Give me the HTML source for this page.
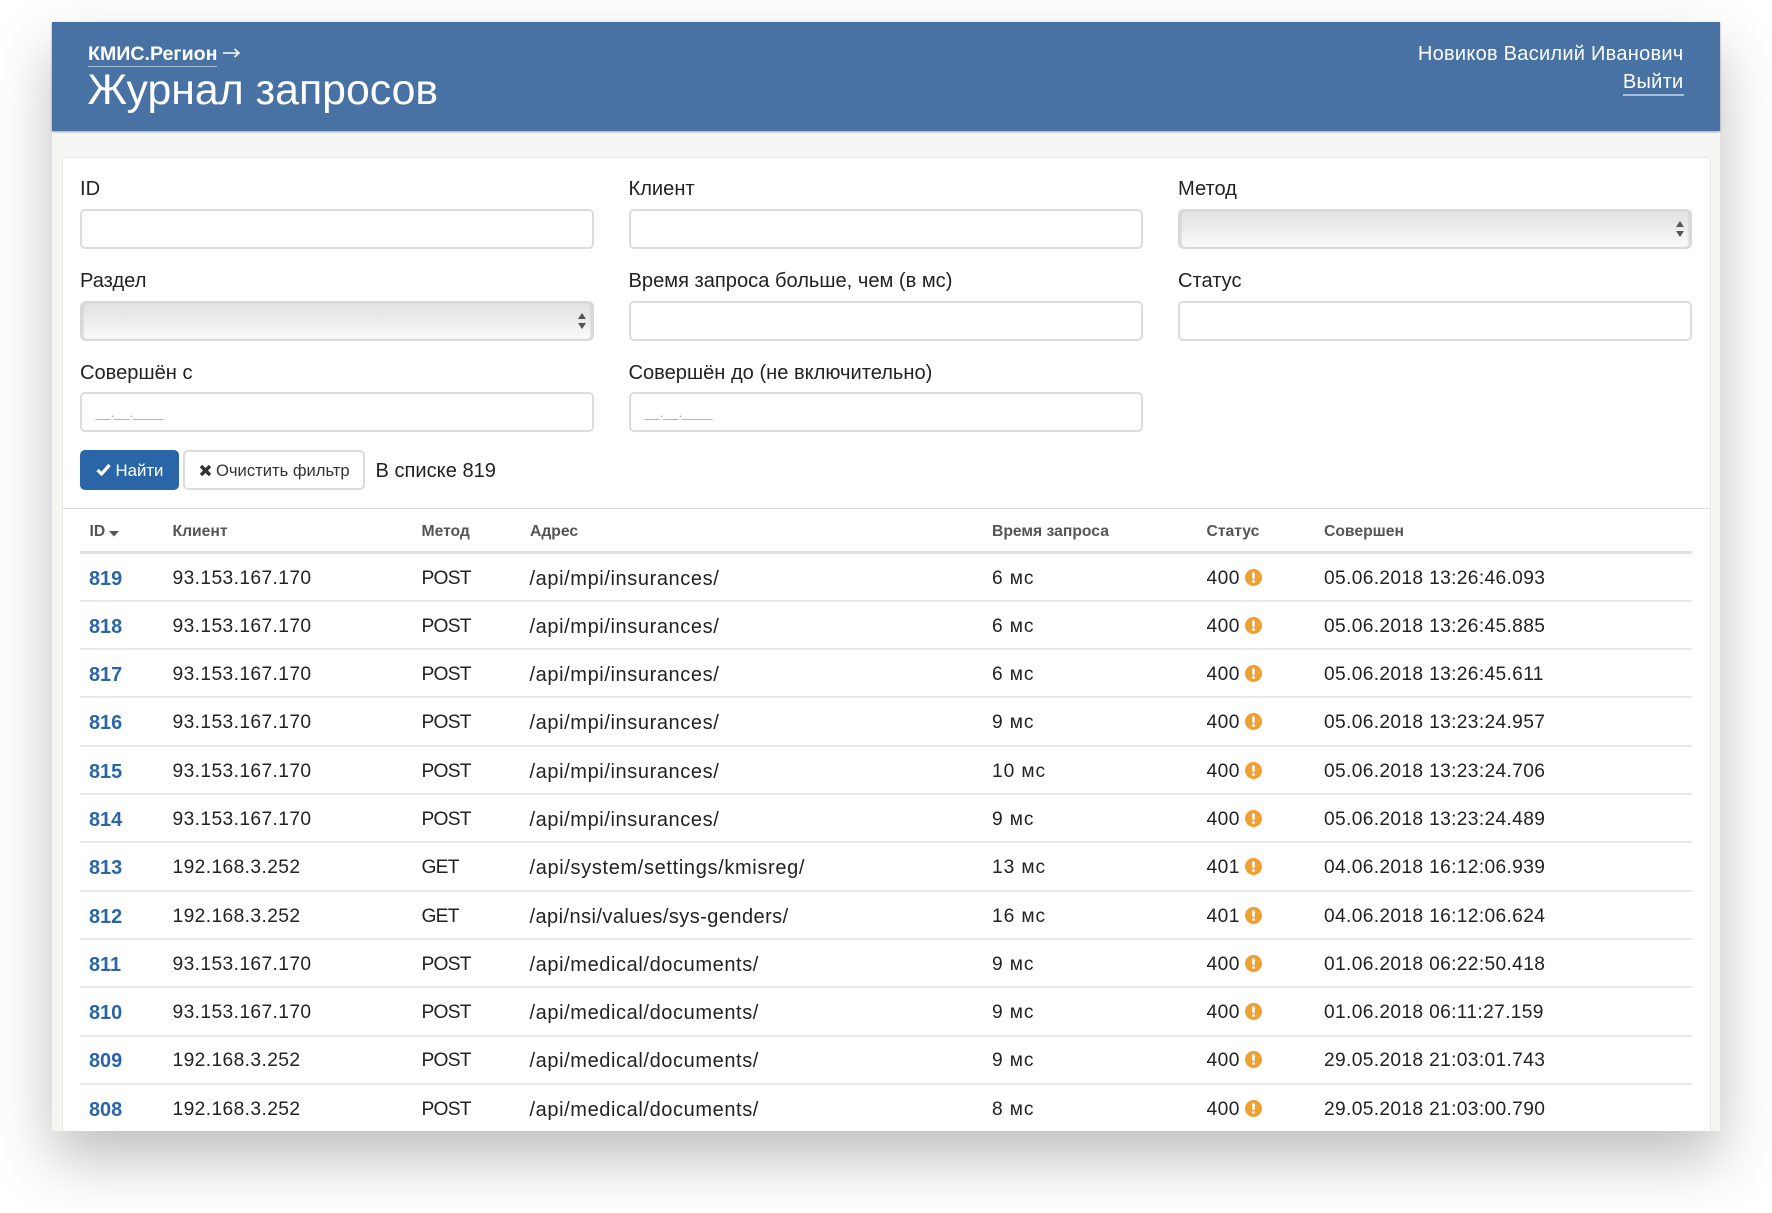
<!DOCTYPE html>
<html lang="ru"><head><meta charset="utf-8"><title>Журнал запросов</title>
<style>
html,body{margin:0;padding:0;background:#fff}
body{width:1772px;height:1213px;position:relative;overflow:hidden;font-family:"Liberation Sans","DejaVu Sans",sans-serif;color:#222}
#w{position:absolute;left:52px;top:22px;width:1668px;height:1109px;background:#f5f6f1;box-shadow:0 28px 55px rgba(0,0,0,.25)}
#page{position:absolute;left:0;top:0;width:1772px;height:1131px;overflow:hidden}
#h{position:absolute;left:52px;top:22px;width:1668px;height:109px;background:#4872a4;box-shadow:0 1px 2px rgba(0,0,0,.35)}
#c{position:absolute;left:62px;top:157px;width:1647px;height:980px;background:#fff;border:1px solid #e8e8e4;border-radius:3px}
.t{position:absolute;white-space:nowrap;line-height:24px}
.w{color:#fff}
.l{font-size:20.1px;color:#222}
.i{position:absolute;box-sizing:border-box;height:40px;width:514px;background:#fff;border:2px solid #dcdcdc;border-radius:5px}
.s{position:absolute;box-sizing:border-box;height:40px;width:514px;border:2px solid #d8d8d8;border-radius:6px;background:linear-gradient(#e2e2e2,#ebebeb 45%,#fbfbfb);box-shadow:inset 2px 0 2px -1px #ccc,inset -2px 0 2px -1px #ccc}
.s svg{position:absolute;right:5px;top:10px}
.p{position:absolute;left:13.5px;top:9px;font-size:13.6px;color:#aaa;line-height:20px}
.b{position:absolute;box-sizing:border-box;top:450px;height:40px;border-radius:5px;font-size:16.8px;line-height:40px}
.ln{position:absolute;left:80px;width:1612px;height:2px;background:#e8e8e8}
.th{position:absolute;top:520px;font-size:15.7px;font-weight:bold;color:#555;line-height:24px;white-space:nowrap}
.r{position:absolute;left:0;width:1772px;height:48px;line-height:48px;font-size:19.2px;color:#222}
.r span{position:absolute;top:2px;white-space:nowrap}
.a{left:89px;color:#2a65a8;font-weight:bold;font-size:19.9px}
.c{left:172.5px;letter-spacing:.4px}
.r .m{left:421.5px;top:1.5px;letter-spacing:-.75px}
.u{left:529.5px;font-size:20px;letter-spacing:.6px}
.d{left:992px;letter-spacing:.9px}
.st{left:1206.5px;letter-spacing:.45px}
.dt{left:1324px;letter-spacing:.34px}
.r svg{position:absolute;left:1245px;top:16px}
</style></head><body>
<div id="w"></div>
<div id="page">
<div id="h"></div>
<div id="c"></div>
<div class="t w" style="left:88px;top:42px;font-size:19.6px;font-weight:bold"><span style="border-bottom:1.5px solid #a9bfd8;padding-bottom:0;display:inline-block;line-height:23px">КМИС.Регион</span></div>
<svg style="position:absolute;left:223px;top:47px" width="18" height="12" viewBox="0 0 18 12"><path d="M0 6H16M11.5 2L16 6L11.5 10" fill="none" stroke="#fff" stroke-width="1.6"/></svg>
<div class="t w" style="left:87.5px;top:65px;font-size:42.8px;line-height:50px">Журнал запросов</div>
<div class="t w" style="right:88.5px;top:42px;font-size:20px;letter-spacing:.27px">Новиков Василий Иванович</div>
<div class="t w" style="right:88.5px;top:71px;font-size:20px;letter-spacing:.27px;line-height:23px;border-bottom:2px solid #a9bfd8">Выйти</div>

<div class="t l" style="left:80px;top:177px">ID</div>
<div class="t l" style="left:628.5px;top:177px">Клиент</div>
<div class="t l" style="left:1178px;top:177px">Метод</div>
<div class="i" style="left:80px;top:209px"></div>
<div class="i" style="left:629px;top:209px"></div>
<div class="s" style="left:1178px;top:209px"><svg width="10" height="16" viewBox="0 0 10 16"><path d="M5 0L9 6H1ZM5 16L1 10H9Z" fill="#555"/></svg></div>

<div class="t l" style="left:80px;top:269px">Раздел</div>
<div class="t l" style="left:628.5px;top:269px">Время запроса больше, чем (в мс)</div>
<div class="t l" style="left:1178px;top:269px">Статус</div>
<div class="s" style="left:80px;top:301px"><svg width="10" height="16" viewBox="0 0 10 16"><path d="M5 0L9 6H1ZM5 16L1 10H9Z" fill="#555"/></svg></div>
<div class="i" style="left:629px;top:301px"></div>
<div class="i" style="left:1178px;top:301px"></div>

<div class="t l" style="left:80px;top:361px">Совершён с</div>
<div class="t l" style="left:628.5px;top:361px">Совершён до (не включительно)</div>
<div class="i" style="left:80px;top:392px"><span class="p">__.__.____</span></div>
<div class="i" style="left:629px;top:392px"><span class="p">__.__.____</span></div>

<div class="b" style="left:80px;width:99px;background:#2a65a8;color:#fff;border:1px solid #2a65a8">
<svg style="position:absolute;left:15px;top:12px" width="15" height="13" viewBox="0 0 15 13"><path d="M1.5 7L5.5 11L13.5 2" fill="none" stroke="#fff" stroke-width="3.2"/></svg>
<span style="position:absolute;left:34.5px;top:0">Найти</span></div>
<div class="b" style="left:183px;width:182px;background:#fff;border:2px solid #dcdcdc;color:#333">
<svg style="position:absolute;left:14px;top:12px" width="13" height="13" viewBox="0 0 13 13"><path d="M2 2L11 11M11 2L2 11" fill="none" stroke="#333" stroke-width="3.4"/></svg>
<span style="position:absolute;left:31px;top:-1px;font-size:16.6px">Очистить фильтр</span></div>
<div class="t" style="left:375.5px;top:459px;font-size:20.1px">В списке 819</div>

<div style="position:absolute;left:62px;width:1648px;top:507.5px;height:1.5px;background:#dedede"></div>
<div class="th" style="left:89.5px">ID</div>
<svg style="position:absolute;left:109px;top:531px" width="10" height="6" viewBox="0 0 10 6"><path d="M0 0H10L5 5.5Z" fill="#555"/></svg>
<div class="th" style="left:172.5px">Клиент</div>
<div class="th" style="left:421.5px">Метод</div>
<div class="th" style="left:530px">Адрес</div>
<div class="th" style="left:992px">Время запроса</div>
<div class="th" style="left:1206.5px">Статус</div>
<div class="th" style="left:1324px">Совершен</div>
<div class="ln" style="top:551px;height:3px;background:#e2e2e2"></div>

<div class="ln" style="top:600px"></div><div class="ln" style="top:648px"></div><div class="ln" style="top:696px"></div><div class="ln" style="top:745px"></div><div class="ln" style="top:793px"></div><div class="ln" style="top:841px"></div><div class="ln" style="top:890px"></div><div class="ln" style="top:938px"></div><div class="ln" style="top:986px"></div><div class="ln" style="top:1035px"></div><div class="ln" style="top:1083px"></div>

<div class="r" style="top:553px"><span class="a">819</span><span class="c">93.153.167.170</span><span class="m">POST</span><span class="u">/api/mpi/insurances/</span><span class="d">6 мс</span><span class="st">400</span><svg width="17" height="17" viewBox="0 0 17 17"><circle cx="8.5" cy="8.5" r="8.5" fill="#f0a030"/><path d="M7 3.5H10L9.6 10H7.4ZM7.2 11.2H9.8V13.6H7.2Z" fill="#fff"/></svg><span class="dt">05.06.2018 13:26:46.093</span></div>
<div class="r" style="top:601px"><span class="a">818</span><span class="c">93.153.167.170</span><span class="m">POST</span><span class="u">/api/mpi/insurances/</span><span class="d">6 мс</span><span class="st">400</span><svg width="17" height="17" viewBox="0 0 17 17"><circle cx="8.5" cy="8.5" r="8.5" fill="#f0a030"/><path d="M7 3.5H10L9.6 10H7.4ZM7.2 11.2H9.8V13.6H7.2Z" fill="#fff"/></svg><span class="dt">05.06.2018 13:26:45.885</span></div>
<div class="r" style="top:649px"><span class="a">817</span><span class="c">93.153.167.170</span><span class="m">POST</span><span class="u">/api/mpi/insurances/</span><span class="d">6 мс</span><span class="st">400</span><svg width="17" height="17" viewBox="0 0 17 17"><circle cx="8.5" cy="8.5" r="8.5" fill="#f0a030"/><path d="M7 3.5H10L9.6 10H7.4ZM7.2 11.2H9.8V13.6H7.2Z" fill="#fff"/></svg><span class="dt">05.06.2018 13:26:45.611</span></div>
<div class="r" style="top:697px"><span class="a">816</span><span class="c">93.153.167.170</span><span class="m">POST</span><span class="u">/api/mpi/insurances/</span><span class="d">9 мс</span><span class="st">400</span><svg width="17" height="17" viewBox="0 0 17 17"><circle cx="8.5" cy="8.5" r="8.5" fill="#f0a030"/><path d="M7 3.5H10L9.6 10H7.4ZM7.2 11.2H9.8V13.6H7.2Z" fill="#fff"/></svg><span class="dt">05.06.2018 13:23:24.957</span></div>
<div class="r" style="top:746px"><span class="a">815</span><span class="c">93.153.167.170</span><span class="m">POST</span><span class="u">/api/mpi/insurances/</span><span class="d">10 мс</span><span class="st">400</span><svg width="17" height="17" viewBox="0 0 17 17"><circle cx="8.5" cy="8.5" r="8.5" fill="#f0a030"/><path d="M7 3.5H10L9.6 10H7.4ZM7.2 11.2H9.8V13.6H7.2Z" fill="#fff"/></svg><span class="dt">05.06.2018 13:23:24.706</span></div>
<div class="r" style="top:794px"><span class="a">814</span><span class="c">93.153.167.170</span><span class="m">POST</span><span class="u">/api/mpi/insurances/</span><span class="d">9 мс</span><span class="st">400</span><svg width="17" height="17" viewBox="0 0 17 17"><circle cx="8.5" cy="8.5" r="8.5" fill="#f0a030"/><path d="M7 3.5H10L9.6 10H7.4ZM7.2 11.2H9.8V13.6H7.2Z" fill="#fff"/></svg><span class="dt">05.06.2018 13:23:24.489</span></div>
<div class="r" style="top:842px"><span class="a">813</span><span class="c">192.168.3.252</span><span class="m">GET</span><span class="u" style="letter-spacing:.65px">/api/system/settings/kmisreg/</span><span class="d">13 мс</span><span class="st">401</span><svg width="17" height="17" viewBox="0 0 17 17"><circle cx="8.5" cy="8.5" r="8.5" fill="#f0a030"/><path d="M7 3.5H10L9.6 10H7.4ZM7.2 11.2H9.8V13.6H7.2Z" fill="#fff"/></svg><span class="dt">04.06.2018 16:12:06.939</span></div>
<div class="r" style="top:891px"><span class="a">812</span><span class="c">192.168.3.252</span><span class="m">GET</span><span class="u" style="letter-spacing:.44px">/api/nsi/values/sys-genders/</span><span class="d">16 мс</span><span class="st">401</span><svg width="17" height="17" viewBox="0 0 17 17"><circle cx="8.5" cy="8.5" r="8.5" fill="#f0a030"/><path d="M7 3.5H10L9.6 10H7.4ZM7.2 11.2H9.8V13.6H7.2Z" fill="#fff"/></svg><span class="dt">04.06.2018 16:12:06.624</span></div>
<div class="r" style="top:939px"><span class="a">811</span><span class="c">93.153.167.170</span><span class="m">POST</span><span class="u">/api/medical/documents/</span><span class="d">9 мс</span><span class="st">400</span><svg width="17" height="17" viewBox="0 0 17 17"><circle cx="8.5" cy="8.5" r="8.5" fill="#f0a030"/><path d="M7 3.5H10L9.6 10H7.4ZM7.2 11.2H9.8V13.6H7.2Z" fill="#fff"/></svg><span class="dt">01.06.2018 06:22:50.418</span></div>
<div class="r" style="top:987px"><span class="a">810</span><span class="c">93.153.167.170</span><span class="m">POST</span><span class="u">/api/medical/documents/</span><span class="d">9 мс</span><span class="st">400</span><svg width="17" height="17" viewBox="0 0 17 17"><circle cx="8.5" cy="8.5" r="8.5" fill="#f0a030"/><path d="M7 3.5H10L9.6 10H7.4ZM7.2 11.2H9.8V13.6H7.2Z" fill="#fff"/></svg><span class="dt">01.06.2018 06:11:27.159</span></div>
<div class="r" style="top:1035px"><span class="a">809</span><span class="c">192.168.3.252</span><span class="m">POST</span><span class="u">/api/medical/documents/</span><span class="d">9 мс</span><span class="st">400</span><svg width="17" height="17" viewBox="0 0 17 17"><circle cx="8.5" cy="8.5" r="8.5" fill="#f0a030"/><path d="M7 3.5H10L9.6 10H7.4ZM7.2 11.2H9.8V13.6H7.2Z" fill="#fff"/></svg><span class="dt">29.05.2018 21:03:01.743</span></div>
<div class="r" style="top:1084px"><span class="a">808</span><span class="c">192.168.3.252</span><span class="m">POST</span><span class="u">/api/medical/documents/</span><span class="d">8 мс</span><span class="st">400</span><svg width="17" height="17" viewBox="0 0 17 17"><circle cx="8.5" cy="8.5" r="8.5" fill="#f0a030"/><path d="M7 3.5H10L9.6 10H7.4ZM7.2 11.2H9.8V13.6H7.2Z" fill="#fff"/></svg><span class="dt">29.05.2018 21:03:00.790</span></div>
</div>
</body></html>
